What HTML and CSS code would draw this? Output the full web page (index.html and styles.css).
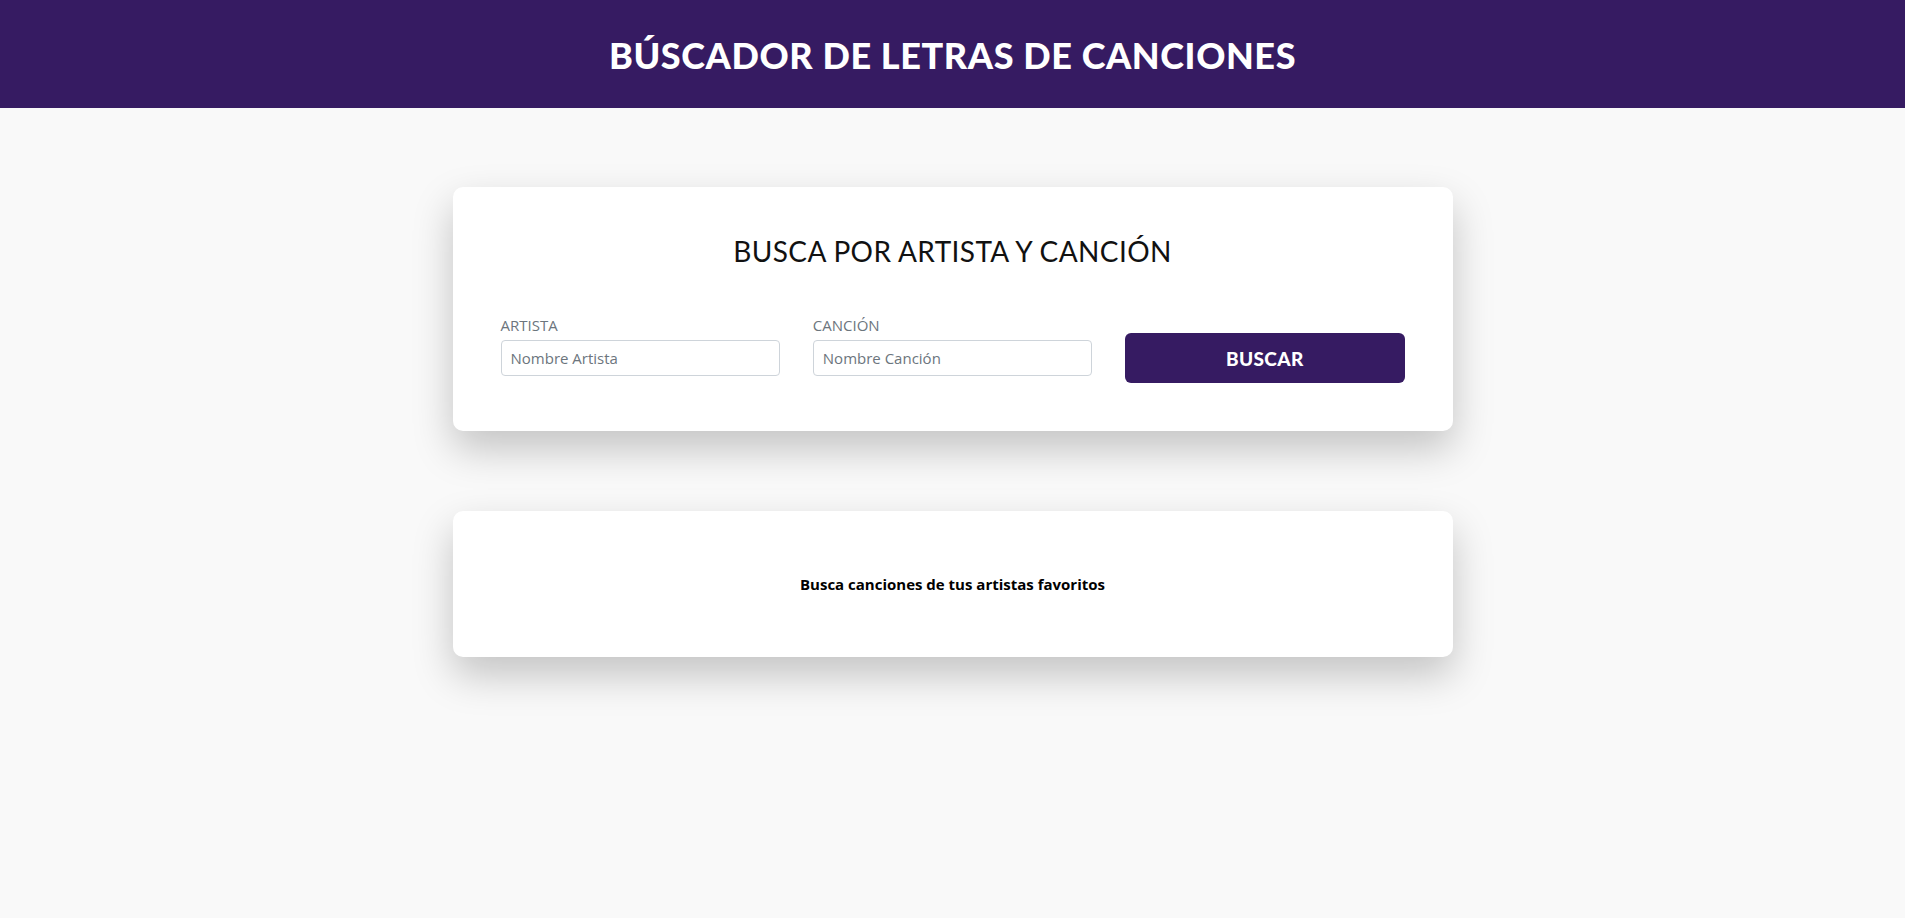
FILE: index.html
```html
<!DOCTYPE html>
<html lang="es">
<head>
<meta charset="utf-8">
<title>Buscador de letras</title>
<link rel="stylesheet" href="styles.css">
</head>
<body>
<header class="site-header">
  <h1 class="site-title">BÚSCADOR DE LETRAS DE CANCIONES</h1>
</header>
<main class="main">
  <section class="card search-card">
    <h2 class="card-title">BUSCA POR ARTISTA Y CANCIÓN</h2>
    <form class="search-form">
      <div class="field">
        <label class="field-label">ARTISTA</label>
        <input class="field-input" type="text" placeholder="Nombre Artista">
      </div>
      <div class="field">
        <label class="field-label">CANCIÓN</label>
        <input class="field-input" type="text" placeholder="Nombre Canción">
      </div>
      <div class="field field-button">
        <button class="btn" type="button">BUSCAR</button>
      </div>
    </form>
  </section>
  <section class="card result-card">
    <p class="result-text">Busca canciones de tus artistas favoritos</p>
  </section>
</main>
</body>
</html>
```

FILE: styles.css
```css
* { box-sizing: border-box; }
html, body { margin: 0; padding: 0; }
body {
  background: #f9f9f9;
  font-family: "Open Sans", "Noto Sans", sans-serif;
  min-height: 918px;
}
.site-header {
  background: #361b62;
  height: 108px;
  display: flex;
  align-items: center;
  justify-content: center;
}
.site-title {
  margin: 0;
  color: #fff;
  font-family: "Lato", sans-serif;
  font-weight: 900;
  font-size: 36px;
  letter-spacing: 0.6px;
  line-height: 1;
  padding-top: 2px;
}
.main {
  display: flex;
  flex-direction: column;
  align-items: center;
  gap: 80px;
  padding-top: 79px;
}
.card {
  width: 1000px;
  background: #fff;
  border-radius: 10px;
  box-shadow: 0 18px 40px rgba(0, 0, 0, 0.22);
}
.search-card {
  padding: 48px;
  height: 244px;
}
.card-title {
  margin: 0;
  text-align: center;
  font-family: "Lato", sans-serif;
  font-weight: 400;
  font-size: 28px;
  line-height: 32px;
  color: #111;
  letter-spacing: 0.4px;
}
.search-form {
  display: grid;
  grid-template-columns: repeat(3, 1fr);
  gap: 33px;
  margin-top: 48px;
  align-items: start;
}
.field {
  display: flex;
  flex-direction: column;
}
.field-label {
  font-size: 15px;
  line-height: 20px;
  color: #6c757d;
  margin-bottom: 5px;
}
.field-input {
  height: 36px;
  border: 1px solid #ced4da;
  border-radius: 4px;
  padding: 0 9px;
  font-family: "Open Sans", "Noto Sans", sans-serif;
  font-size: 15px;
  color: #495057;
  background: #fff;
}
.field-input::placeholder { color: #6c757d; }
.field-button { padding-top: 18px; }
.btn {
  height: 50px;
  border: none;
  border-radius: 6px;
  background: #361b62;
  color: #fff;
  font-family: "Lato", sans-serif;
  font-weight: 900;
  font-size: 19px;
  letter-spacing: 0.4px;
  cursor: pointer;
}
.result-card {
  height: 146px;
  display: flex;
  align-items: center;
  justify-content: center;
}
.result-text {
  margin: 0;
  font-weight: 700;
  font-size: 15px;
  color: #000;
}
```
